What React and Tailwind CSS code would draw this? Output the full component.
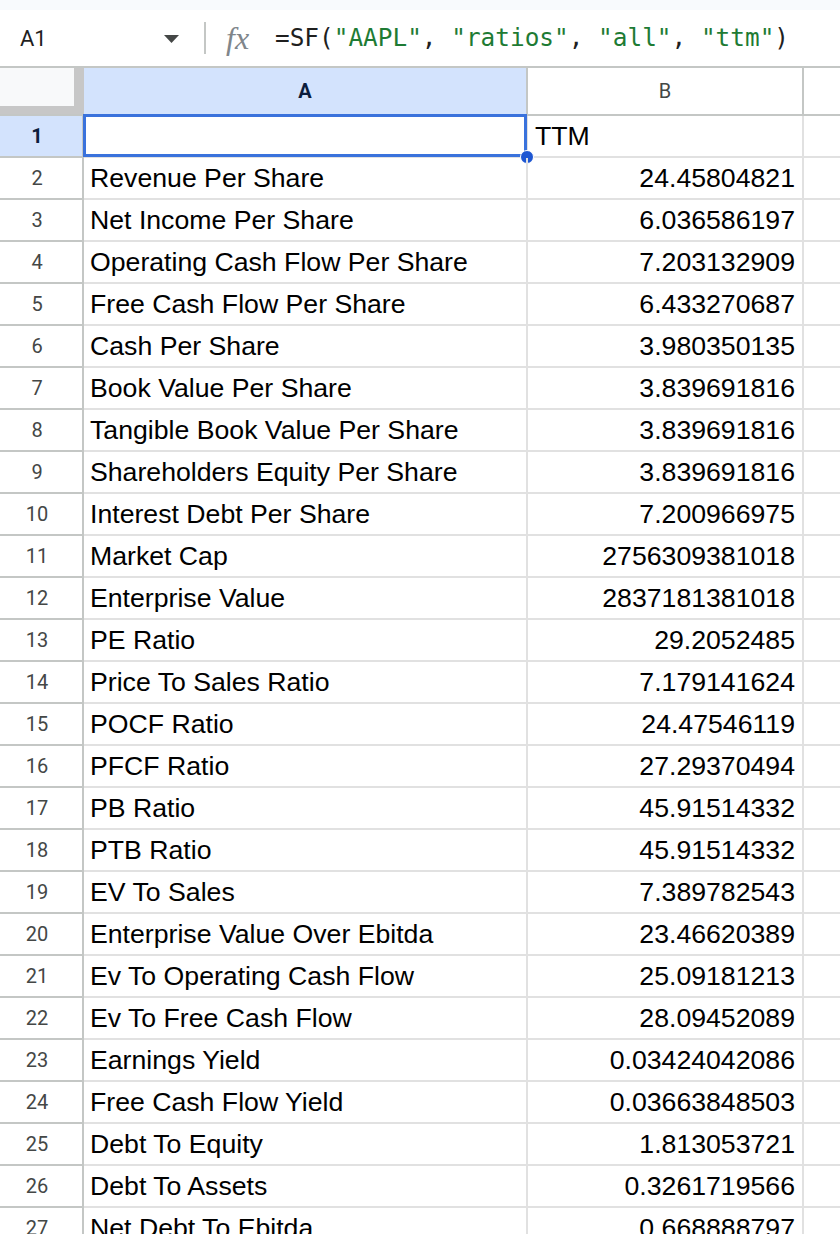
import React from "react";

const rows = [
  ["", "TTM"],
  ["Revenue Per Share", "24.45804821"],
  ["Net Income Per Share", "6.036586197"],
  ["Operating Cash Flow Per Share", "7.203132909"],
  ["Free Cash Flow Per Share", "6.433270687"],
  ["Cash Per Share", "3.980350135"],
  ["Book Value Per Share", "3.839691816"],
  ["Tangible Book Value Per Share", "3.839691816"],
  ["Shareholders Equity Per Share", "3.839691816"],
  ["Interest Debt Per Share", "7.200966975"],
  ["Market Cap", "2756309381018"],
  ["Enterprise Value", "2837181381018"],
  ["PE Ratio", "29.2052485"],
  ["Price To Sales Ratio", "7.179141624"],
  ["POCF Ratio", "24.47546119"],
  ["PFCF Ratio", "27.29370494"],
  ["PB Ratio", "45.91514332"],
  ["PTB Ratio", "45.91514332"],
  ["EV To Sales", "7.389782543"],
  ["Enterprise Value Over Ebitda", "23.46620389"],
  ["Ev To Operating Cash Flow", "25.09181213"],
  ["Ev To Free Cash Flow", "28.09452089"],
  ["Earnings Yield", "0.03424042086"],
  ["Free Cash Flow Yield", "0.03663848503"],
  ["Debt To Equity", "1.813053721"],
  ["Debt To Assets", "0.3261719566"],
  ["Net Debt To Ebitda", "0.668888797"],
];

const Str = ({ children }) => <span className="text-[#1e7b34]">{children}</span>;

const FormulaBar = () => (
  <div className="flex items-center shrink-0 h-[58px] bg-white border-b-2 border-[#c4c7c5]">
    <div className="w-[164px] pl-[20px] text-[22px] text-[#1f1f1f] font-['Roboto',sans-serif]">A1</div>
    <svg width="15" height="8" viewBox="0 0 15 8" className="mt-[1px]">
      <path d="M0 0h15L7.5 8z" fill="#444746" />
    </svg>
    <div className="ml-[25px] w-[2px] h-[32px] bg-[#c4c7c5]" />
    <div className="ml-[20px] w-[32px] text-[32px] leading-none text-[#80868b] italic font-['Liberation_Serif',serif]">
      fx
    </div>
    <div className="ml-[17px] text-[24.4px] text-[#1f1f1f] whitespace-pre font-['DejaVu_Sans_Mono',monospace]">
      =SF(<Str>"AAPL"</Str>, <Str>"ratios"</Str>, <Str>"all"</Str>, <Str>"ttm"</Str>)
    </div>
  </div>
);

const ColumnHeaders = () => (
  <div className="flex shrink-0 h-[48px] border-b-2 border-[#c4c7c5] font-['Roboto',sans-serif] text-[20px]">
    <div className="w-[84px] h-[46px] bg-[#c7c7c7]">
      <div className="w-[74px] h-[38px] bg-[#f8f9fa]" />
    </div>
    <div className="w-[444px] flex items-center justify-center bg-[#d3e3fd] border-r-2 border-[#c4c7c5] font-bold text-[#0b1d3d]">
      A
    </div>
    <div className="w-[276px] flex items-center justify-center bg-white border-r-2 border-[#c4c7c5] text-[#444746]">
      B
    </div>
    <div className="flex-1 bg-white" />
  </div>
);

const Row = ({ n, label, value }) => {
  const first = n === 1;
  return (
    <div className="flex h-[42px] shrink-0">
      <div
        className={`w-[84px] flex items-center justify-center pr-[8px] border-r-2 border-b-2 border-[#c4c7c5] font-['Roboto',sans-serif] text-[20px] ${
          first ? "bg-[#d3e3fd] font-bold text-[#0b1d3d]" : "bg-white text-[#444746]"
        }`}
      >
        {n}
      </div>
      <div className="relative w-[444px] flex items-center px-[6px] border-r-2 border-b-2 border-[#e1e1e1] text-[26.67px] text-black font-['Liberation_Sans',Arial,sans-serif]">
        {label}
        {first && (
          <>
            <div className="absolute -top-[2px] -left-[1px] -right-[1px] -bottom-[1px] border-[3px] border-[#3a72dc]" />
            <div className="absolute -right-[8px] -bottom-[8px] w-[14px] h-[14px] rounded-full bg-[#1d56d2] border border-white" />
          </>
        )}
      </div>
      <div
        className={`w-[276px] flex items-center px-[7px] border-r-2 border-b-2 border-[#e1e1e1] text-[26.67px] text-black font-['Liberation_Sans',Arial,sans-serif] ${
          first ? "justify-start" : "justify-end"
        }`}
      >
        {value}
      </div>
      <div className="flex-1 border-b-2 border-[#e1e1e1]" />
    </div>
  );
};

export default function App() {
  return (
    <div className="w-full h-[1234px] overflow-hidden bg-white flex flex-col">
      <div className="h-[10px] shrink-0 bg-[#f8fafd]" />
      <FormulaBar />
      <ColumnHeaders />
      {rows.map(([label, value], i) => (
        <Row key={i} n={i + 1} label={label} value={value} />
      ))}
    </div>
  );
}
